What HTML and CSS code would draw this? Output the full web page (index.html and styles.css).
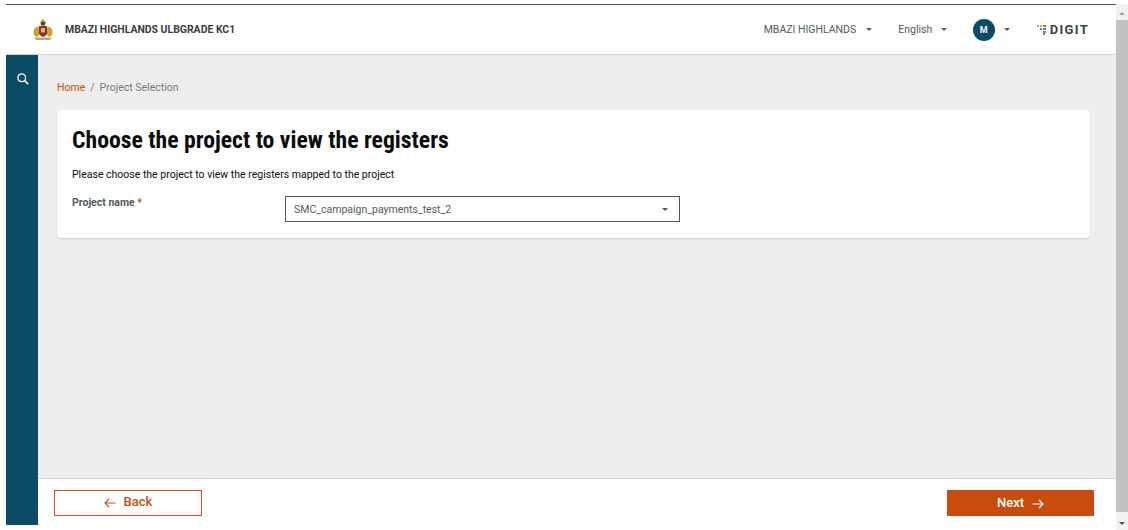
FILE: index.html
```html
<!DOCTYPE html>
<html lang="en">
<head>
    <meta charset="UTF-8">
    <title>Project Selection</title>
    <link rel="stylesheet" href="styles.css">
</head>
<body>
    <div class="app">
        <div class="window">
            <div class="topbar">
                <svg class="emblem" width="20" height="22" viewBox="0 0 20 22">
                    <path d="M0.500 14 C0.500 9 3 7.500 5.500 8 L7 15 L4 18 C2 17 0.500 16 0.500 14Z" fill="#c9a227"/>
                    <path d="M19.500 14 C19.500 9 17 7.500 14.500 8 L13 15 L16 18 C18 17 19.500 16 19.500 14Z" fill="#c9a227"/>
                    <path d="M6 7 H14 V14 C14 16 12 17 10 18 C8 17 6 16 6 14Z" fill="#8c2f2a"/>
                    <path d="M8 9 H12 V13.500 H8Z" fill="#d9b46a"/>
                    <path d="M7.500 2.500 H12.500 L12 6.500 H8Z" fill="#6b3a2a"/>
                    <circle cx="10" cy="1.500" r="1.500" fill="#c9a227"/>
                    <path d="M1 18.500 H19 L17 21 H3Z" fill="#a9b36a"/>
                </svg>
                <div class="tenant">MBAZI HIGHLANDS ULBGRADE KC1</div>
                <div class="spacer"></div>
                <div class="menu cityMenu">MBAZI HIGHLANDS<span class="caret"></span></div>
                <div class="menu langMenu">English<span class="caret"></span></div>
                <div class="avatar">M</div>
                <span class="caret avatarCaret"></span>
                <div class="digit">
                    <svg width="9" height="10" viewBox="0 0 9 10">
                        <rect x="0" y="0" width="2" height="2" fill="#e8a33d"/>
                        <rect x="3" y="0" width="2" height="2" fill="#e8a33d"/>
                        <rect x="6" y="0" width="3" height="2" fill="#d9603b"/>
                        <rect x="3" y="3" width="2" height="2" fill="#2f8fb3"/>
                        <rect x="6" y="3" width="3" height="2" fill="#2f8fb3"/>
                        <rect x="6" y="6" width="3" height="2" fill="#4aa564"/>
                        <rect x="6" y="8" width="2" height="2" fill="#4aa564"/>
                    </svg>
                    <span>DIGIT</span>
                </div>
            </div>
            <div class="body">
                <div class="sidebar">
                    <svg width="12" height="12" viewBox="0 0 14 14" fill="none" stroke="#fff" stroke-width="1.500">
                        <circle cx="5.500" cy="5.500" r="4.500"/>
                        <path d="M8.700 8.700 L13 13" stroke-width="1.900"/>
                    </svg>
                </div>
                <div class="content">
                    <div class="page">
                        <div class="crumbs"><span class="crumbHome">Home</span><span class="crumbSep">/</span>Project Selection</div>
                        <div class="card">
                            <h1>Choose the project to view the registers</h1>
                            <p>Please choose the project to view the registers mapped to the project</p>
                            <div class="field">
                                <label>Project name <span class="req">*</span></label>
                                <div class="select">SMC_campaign_payments_test_2<span class="caret"></span></div>
                            </div>
                        </div>
                    </div>
                    <div class="footer">
                        <button class="btn back">
                            <svg width="12" height="10" viewBox="0 0 12 10" fill="none" stroke="currentColor" stroke-width="1.100"><path d="M11.500 5 H1 M5 1 L1 5 L5 9"/></svg>
                            Back
                        </button>
                        <button class="btn next">
                            Next
                            <svg width="12" height="10" viewBox="0 0 12 10" fill="none" stroke="currentColor" stroke-width="1.100"><path d="M0.500 5 H11 M7 1 L11 5 L7 9"/></svg>
                        </button>
                    </div>
                </div>
            </div>
        </div>
        <div class="scrollbar">
            <span class="arrowUp"></span>
            <div class="thumb"></div>
            <span class="arrowDown"></span>
        </div>
    </div>
</body>
</html>
```

FILE: styles.css
```css
*{
    box-sizing: border-box;
}

html, body{
    margin:0;
    height:100%;
    overflow:hidden;
    background:#fff;
    font-family: Roboto, "Liberation Sans", sans-serif;
}

.app{
    display:flex;
    height:530px;
    padding-top:4px;
    padding-left:6px;
}

.window{
    width:1110px;
    height:521px;
    display:flex;
    flex-direction:column;
    border-top:solid 1px #5a4f55;
}

.topbar{
    height:50px;
    display:flex;
    align-items:center;
    padding-left:27px;
    padding-right:27px;
    background:#fff;
    border-bottom:solid 1px #d6d5d4;
}

.emblem{
    margin-right:12px;
}

.tenant{
    font-size:10.450px;
    font-weight:700;
    color:#3d3d3d;
}

.spacer{
    flex:1;
}

.menu{
    display:flex;
    align-items:center;
    font-size:10.500px;
    color:#505a5f;
}

.caret{
    display:inline-block;
    width:0;
    height:0;
    border-left:3.500px solid transparent;
    border-right:3.500px solid transparent;
    border-top:3.500px solid #505a5f;
}

.menu .caret{
    margin-left:9px;
}

.cityMenu{
    margin-right:26px;
}

.cityMenu .caret{
    margin-left:10px;
}

.langMenu{
    margin-right:25.500px;
}

.avatar{
    width:22px;
    height:22px;
    border-radius:50%;
    background:#0b4b66;
    color:#fff;
    font-size:9px;
    font-weight:700;
    display:flex;
    align-items:center;
    justify-content:center;
}

.avatarCaret{
    margin-left:9.500px;
    margin-right:26.500px;
}

.digit{
    display:flex;
    align-items:center;
    gap:4px;
    font-size:13px;
    font-weight:700;
    letter-spacing:1.300px;
    color:#3d3f40;
}

.body{
    flex:1;
    display:flex;
    min-height:0;
}

.sidebar{
    width:32px;
    background:#0b4b66;
    padding-top:18px;
    padding-left:10.500px;
}

.sidebar svg{
    display:block;
}

.content{
    flex:1;
    display:flex;
    flex-direction:column;
    background:#eee;
}

.page{
    flex:1;
    padding:26px 26px 0 19px;
}

.crumbs{
    font-size:10.500px;
    line-height:14px;
    color:#787878;
    margin-bottom:15px;
}

.crumbHome{
    color:#c84c0e;
}

.crumbSep{
    margin:0 5px;
}

.card{
    height:128px;
    background:#fff;
    border-radius:4px;
    box-shadow:0 1px 2px rgba(0,0,0,0.16);
    padding:16px 16px 0 15px;
}

h1{
    margin:0;
    font-family: "Roboto Condensed", Roboto, sans-serif;
    font-stretch:condensed;
    font-size:23.700px;
    line-height:28px;
    font-weight:700;
    color:#0b0c0c;
}

p{
    margin:14px 0 0 0;
    font-size:10.500px;
    line-height:14px;
    color:#0b0c0c;
}

.field{
    display:flex;
    margin-top:14px;
}

label{
    width:213px;
    font-size:10.500px;
    line-height:14px;
    font-weight:700;
    color:#505a5f;
}

.req{
    color:#c84c0e;
}

.select{
    width:395px;
    height:26px;
    border:solid 1px #505a5f;
    display:flex;
    align-items:center;
    justify-content:space-between;
    padding:0 11px 0 8px;
    font-size:10.500px;
    color:#505a5f;
}

.footer{
    height:47px;
    background:#fff;
    border-top:solid 1px #d6d5d4;
    display:flex;
    justify-content:space-between;
    padding:11px 22px 0 16px;
}

.btn{
    height:26px;
    font-family:inherit;
    font-size:13px;
    font-weight:500;
    display:flex;
    align-items:center;
    justify-content:center;
    gap:8px;
    padding:0 0 2px 0;
    border-radius:0;
}

.btn svg{
    margin-top:3px;
}

.back{
    width:148px;
    background:#fff;
    border:solid 1px #c84c0e;
    color:#c84c0e;
    padding-bottom:3px;
}

.next{
    width:147px;
    background:#c84c0e;
    border:none;
    color:#fff;
}

.scrollbar{
    width:12px;
    height:526px;
    background:#f1f1f1;
    display:flex;
    flex-direction:column;
    align-items:center;
}

.thumb{
    flex:1;
    width:100%;
    background:#c1c1c1;
    margin:5px 0 10px 0;
}

.arrowUp, .arrowDown{
    width:0;
    height:0;
    border-left:3px solid transparent;
    border-right:3px solid transparent;
}

.arrowUp{
    margin-top:8px;
    border-bottom:3px solid #a3a3a3;
}

.arrowDown{
    margin-bottom:5px;
    border-top:3px solid #505050;
}
```
